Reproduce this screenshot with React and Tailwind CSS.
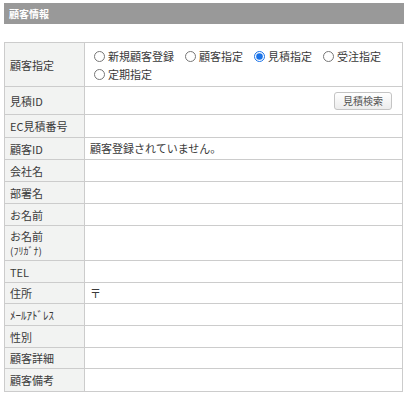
import { useState } from "react";

const font = { fontFamily: "'Noto Sans CJK JP', 'Noto Sans', sans-serif" };

const modes = ["新規顧客登録", "顧客指定", "見積指定", "受注指定", "定期指定"];

function Row({ label, h, children }) {
  return (
    <div className={`flex border-b border-[#cccccc] ${h}`}>
      <div className="w-[80px] shrink-0 flex items-center pl-[5px] bg-[#f2f3f2] border-r border-[#cccccc] leading-[14px]">
        {label}
      </div>
      <div className="flex-1 flex items-center pl-[5px] pr-[10px]">{children}</div>
    </div>
  );
}

export default function App() {
  const [mode, setMode] = useState("見積指定");

  return (
    <div className="w-[408px] h-[398px] bg-white pt-[3px] px-[4px] text-[11px] text-[#3a3a3a]" style={font}>
      {/* 見出し */}
      <div className="h-[21px] bg-[#999999] flex items-center pl-[5px] text-white font-bold text-[10px]">
        顧客情報
      </div>

      <div className="mt-[18px] w-[399px] border-t border-l border-r border-[#cccccc]">
        <Row label="顧客指定" h="h-[44px]">
          <div className="flex flex-wrap gap-x-[11px] gap-y-[4px] pl-[4px] pt-[1px]">
            {modes.map((m) => (
              <label key={m} className="inline-flex items-center gap-[3px] leading-[14px]">
                <input
                  type="radio"
                  name="mode"
                  checked={mode === m}
                  onChange={() => setMode(m)}
                  className="m-0 w-[11px] h-[11px] accent-[#1a73e8]"
                />
                {m}
              </label>
            ))}
          </div>
        </Row>
        <Row label="見積ID" h="h-[28px]">
          <button className="ml-auto h-[18px] w-[58px] rounded-[3px] border border-[#c4c4c4] bg-gradient-to-b from-white to-[#ececec] text-[10px] text-[#555] leading-none">
            見積検索
          </button>
        </Row>
        <Row label="EC見積番号" h="h-[23px]" />
        <Row label="顧客ID" h="h-[22px]">顧客登録されていません。</Row>
        <Row label="会社名" h="h-[22px]" />
        <Row label="部署名" h="h-[22px]" />
        <Row label="お名前" h="h-[22px]" />
        <Row
          label={
            <span>
              お名前
              <br />
              <span className="text-[10px]">(ﾌﾘｶﾞﾅ)</span>
            </span>
          }
          h="h-[35px]"
        />
        <Row label="TEL" h="h-[22px]" />
        <Row label="住所" h="h-[21px]">〒</Row>
        <Row label="ﾒｰﾙｱﾄﾞﾚｽ" h="h-[22px]" />
        <Row label="性別" h="h-[22px]" />
        <Row label="顧客詳細" h="h-[21px]" />
        <Row label="顧客備考" h="h-[23px]" />
      </div>
    </div>
  );
}
